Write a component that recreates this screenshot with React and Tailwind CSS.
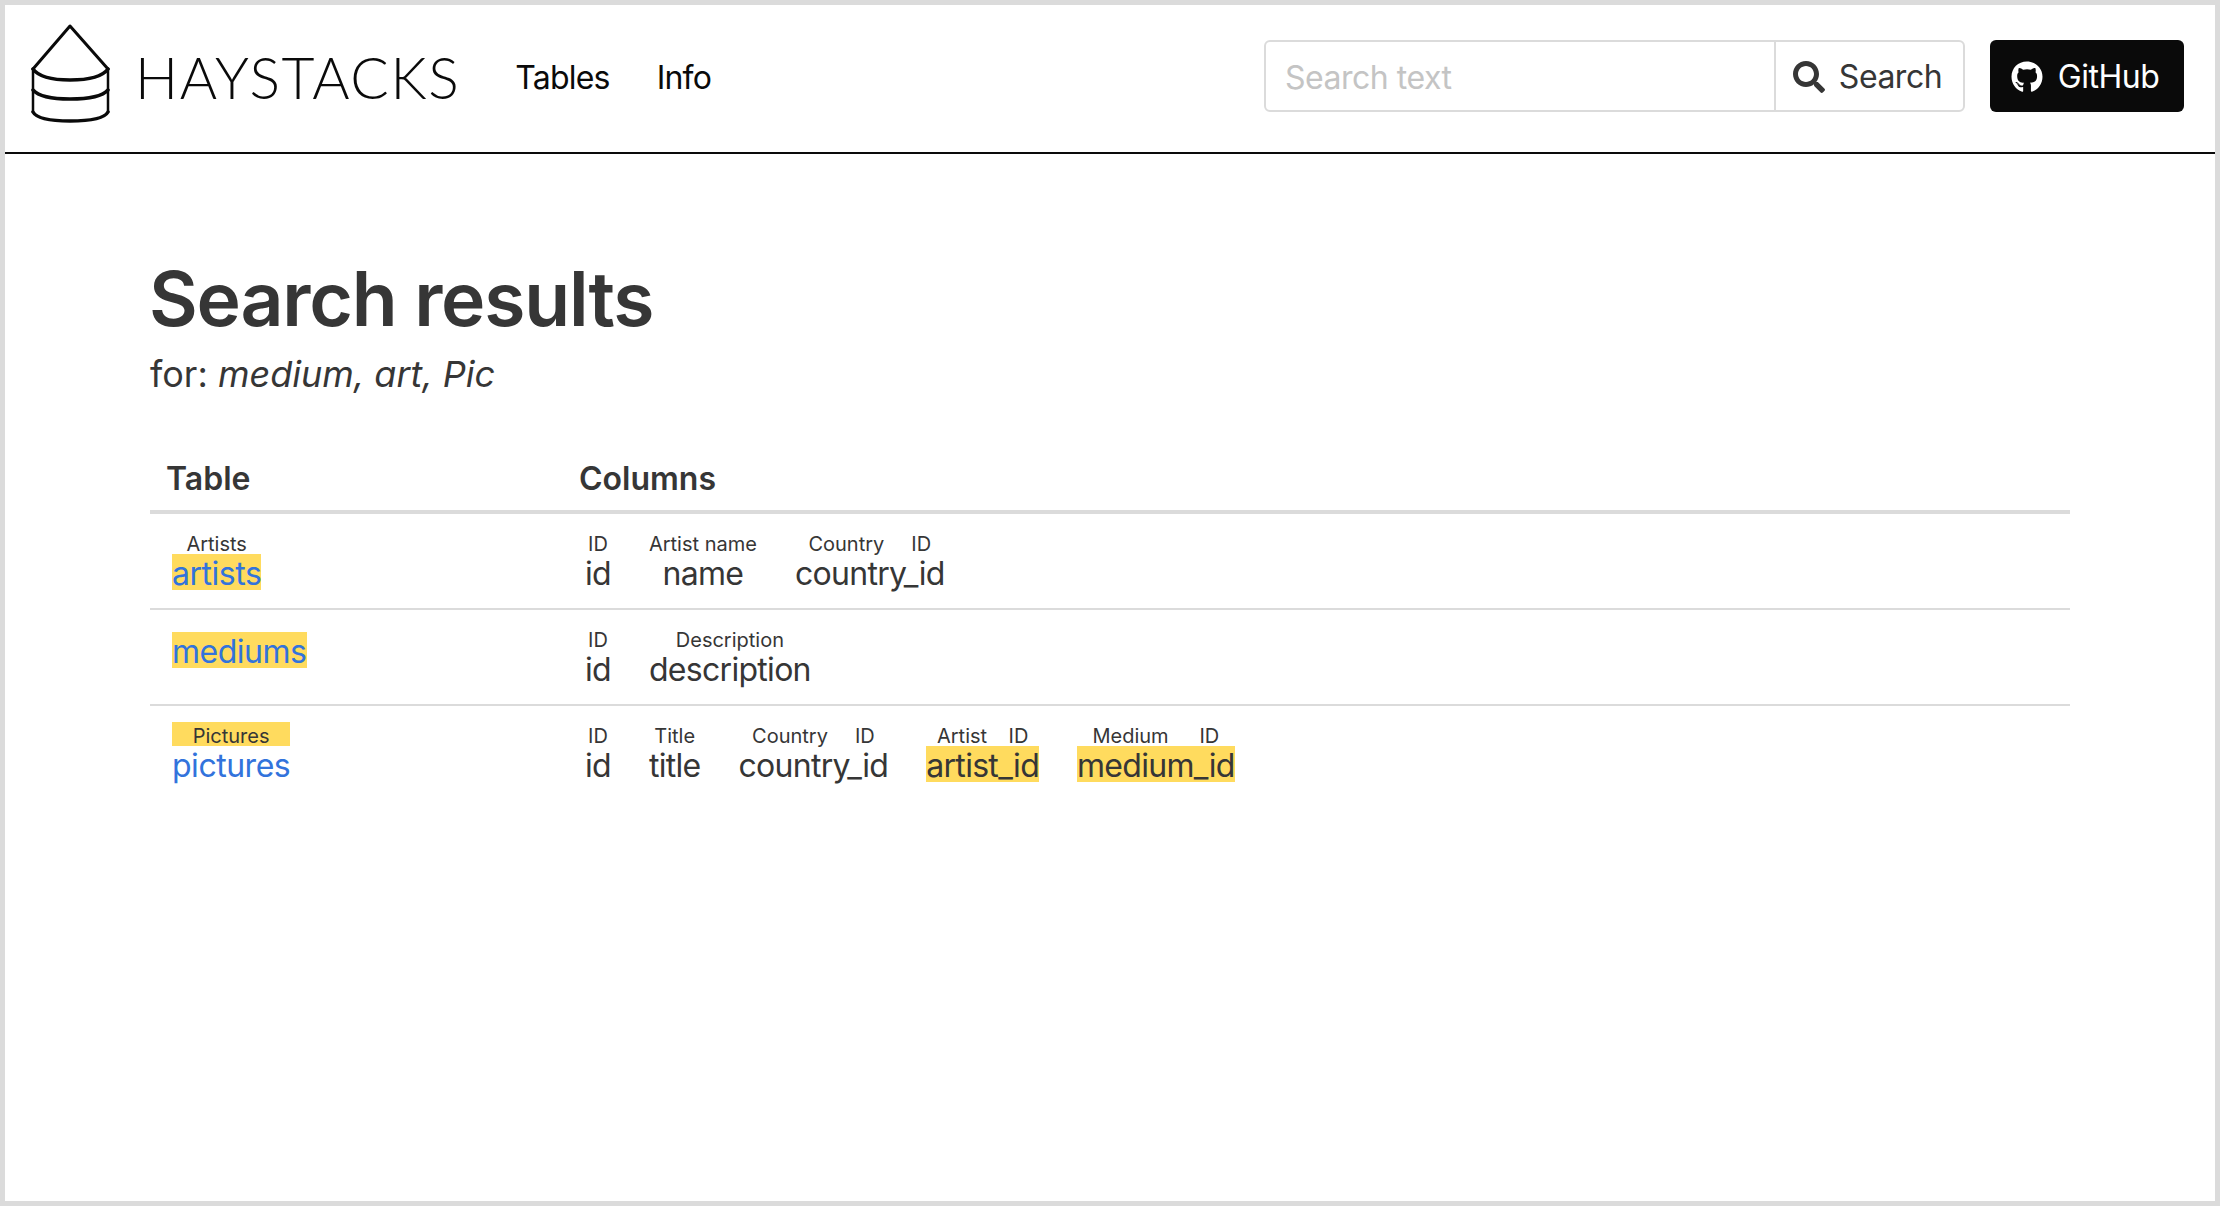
import { FaSearch, FaGithub } from 'react-icons/fa'

const rows = [
  {
    table: 'artists',
    label: 'Artists',
    tableHit: true,
    columns: [
      { name: 'id', labels: ['ID'] },
      { name: 'name', labels: ['Artist name'] },
      { name: 'country_id', labels: ['Country', 'ID'] },
    ],
  },
  {
    table: 'mediums',
    tableHit: true,
    columns: [
      { name: 'id', labels: ['ID'] },
      { name: 'description', labels: ['Description'] },
    ],
  },
  {
    table: 'pictures',
    label: 'Pictures',
    labelHit: true,
    columns: [
      { name: 'id', labels: ['ID'] },
      { name: 'title', labels: ['Title'] },
      { name: 'country_id', labels: ['Country', 'ID'] },
      { name: 'artist_id', labels: ['Artist', 'ID'], hit: true },
      { name: 'medium_id', labels: ['Medium', 'ID'], hit: true },
    ],
  },
]

function Logo() {
  return (
    <svg width="80" height="100" viewBox="30 24 80 100" fill="none" stroke="#0a0a0a" strokeWidth="3" strokeLinejoin="round" strokeLinecap="round">
      <path d="M33 69 L70 26 L108 69" />
      <path d="M33 69 V112 M108 69 V112" strokeWidth="2.5" />
      <path d="M33 69 Q41 80 70 80 Q100 80 108 69" strokeWidth="3.5" />
      <path d="M33 90 Q41 99 70 99 Q100 99 108 90" strokeWidth="3.5" />
      <path d="M33 112 Q38 121 70 121 Q103 121 108 112" strokeWidth="3.5" />
    </svg>
  )
}

function Ruby({ name, labels, hit }) {
  return (
    <div className="flex flex-col">
      <div className="flex h-6 justify-around text-[20px] leading-[28px]">
        {labels.map((label, i) => (
          <span key={i}>{label}</span>
        ))}
      </div>
      <span className={`h-9 text-center text-[32px] leading-[40px] tracking-[-0.022em] ${hit ? 'bg-[#ffdb5e]' : ''}`}>{name}</span>
    </div>
  )
}

export default function App() {
  return (
    <div className="h-[1206px] border-[5px] border-[#dbdbdb] bg-white font-['Inter',sans-serif] text-[#363636]">
      <nav className="flex h-[149px] items-start border-b-2 border-[#0a0a0a]">
        <div className="ml-[25px] mt-[19px]">
          <Logo />
        </div>
        <a className="ml-[25px] mt-[38px] font-['Lato',sans-serif] text-[57px] font-light leading-[68px] tracking-[1.6px] text-[#0a0a0a]">HAYSTACKS</a>
        <a className="ml-[55px] mt-[53px] text-[32px] leading-[40px] tracking-[-0.025em] text-[#0a0a0a]">Tables</a>
        <a className="ml-[47px] mt-[53px] text-[32px] leading-[40px] tracking-[-0.025em] text-[#0a0a0a]">Info</a>
        <div className="ml-auto mr-[31px] mt-[35px] flex items-start tracking-[-0.03em]">
          <input
            placeholder="Search text"
            className="h-[72px] w-[512px] rounded-l-[6px] border-2 border-[#dbdbdb] pl-[19px] pr-5 pt-[2px] text-[32px] outline-none placeholder:text-[#c4c4c4]"
          />
          <button className="-ml-[2px] flex h-[72px] w-[191px] items-center justify-center gap-[14px] rounded-r-[6px] border-2 border-[#dbdbdb] pr-[4px] pt-[2px] text-[32px]">
            <FaSearch className="h-[32px] w-[32px]" />
            Search
          </button>
          <button className="ml-[25px] flex h-[72px] w-[194px] items-center justify-center gap-[15px] rounded-[6px] bg-[#0a0a0a] pr-[4px] pt-[2px] text-[32px] text-white">
            <FaGithub className="h-[32px] w-[32px]" />
            GitHub
          </button>
        </div>
      </nav>

      <main className="mx-[145px] pt-[100px]">
        <h1 className="-ml-px text-[75px] font-semibold leading-[90px] tracking-[-0.016em]">Search results</h1>
        <p className="mt-[7px] text-[36px] leading-[46px]">
          for: <em>medium, art, Pic</em>
        </p>

        <div className="mt-[55px] flex h-[62px] items-start border-b-4 border-[#dbdbdb] pl-4 pt-[7px] text-[32px] font-semibold leading-10">
          <div className="w-[413px]">Table</div>
          <div>Columns</div>
        </div>

        {rows.map((row) => (
          <div key={row.table} className="flex h-[96px] items-start border-b-2 border-[#dbdbdb] pl-[22px] last:border-b-0">
            <div className="w-[413px]">
              <div className={`inline-flex flex-col ${row.label ? 'pt-4' : 'pt-[22px]'}`}>
                {row.label && (
                  <span className={`h-6 text-center text-[20px] leading-[28px] ${row.labelHit ? 'bg-[#ffdb5e] leading-[24px]' : ''}`}>{row.label}</span>
                )}
                <a className={`h-9 text-center text-[32px] leading-[40px] tracking-[-0.015em] text-[#3273dc] ${row.tableHit ? 'bg-[#ffdb5e]' : ''}`}>{row.table}</a>
              </div>
            </div>
            <div className="flex gap-[38px] pt-4">
              {row.columns.map((col, i) => (
                <Ruby key={i} {...col} />
              ))}
            </div>
          </div>
        ))}
      </main>
    </div>
  )
}
